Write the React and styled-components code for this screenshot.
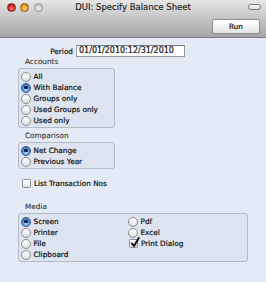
import React from "react";
import styled, { createGlobalStyle, css } from "styled-components";

const Global = createGlobalStyle`
  html, body { margin: 0; padding: 0; }
  body {
    width: 266px; height: 282px; overflow: hidden;
    background: #e4ebf6;
    font-family: "DejaVu Sans", Verdana, sans-serif;
  }
`;

const Window = styled.div`
  width: 266px;
  height: 282px;
  display: flex;
  flex-direction: column;
  background: #e4ebf6;
`;

const Toolbar = styled.div`
  height: 38px;
  box-sizing: border-box;
  background: linear-gradient(#e6e6e6 0%, #d2d2d2 30%, #b4b4b4 75%, #a6a6a6 100%);
  border-bottom: 1px solid #7e7e7e;
  display: flex;
  flex-direction: column;
`;

const TitleRow = styled.div`
  height: 14px;
  display: flex;
  align-items: center;
  padding: 0 5px 0 6.5px;
  position: relative;
`;

const Lights = styled.div`
  display: flex;
  gap: 4.5px;
`;

const lightColors = {
  red: css`background: radial-gradient(circle at 50% 65%, #ff8a80 0%, #e0322a 45%, #9c1010 100%); border: 0.5px solid #7d1b17;`,
  orange: css`background: radial-gradient(circle at 50% 65%, #ffe08a 0%, #f3a22a 45%, #b86a10 100%); border: 0.5px solid #8a5a15;`,
  gray: css`background: radial-gradient(circle at 50% 65%, #f2f2f2 0%, #cfcfcf 50%, #a8a8a8 100%); border: 0.5px solid #999;`,
};

const Light = styled.span`
  width: 9px;
  height: 9px;
  border-radius: 50%;
  box-sizing: border-box;
  ${(p) => lightColors[p.$c]}
`;

const Title = styled.div`
  position: absolute;
  left: 0;
  right: 0;
  top: 0;
  height: 14px;
  line-height: 14px;
  text-align: center;
  font-size: 8.5px;
  color: #1e1e1e;
  -webkit-text-stroke: 0.15px #1e1e1e;
  pointer-events: none;
`;

const Pill = styled.span`
  margin-left: auto;
  width: 13px;
  height: 6px;
  box-sizing: border-box;
  border-radius: 3px;
  border: 1px solid #7c7c7c;
  background: linear-gradient(#ffffff, #d8d8d8);
`;

const ButtonRow = styled.div`
  display: flex;
  justify-content: flex-end;
  padding: 5px 6px 0 0;
`;

const Button = styled.div`
  width: 48px;
  height: 15px;
  box-sizing: border-box;
  border: 1px solid #8e8e8e;
  border-radius: 3px;
  background: linear-gradient(#ffffff 0%, #f3f3f3 50%, #e2e2e2 100%);
  font-size: 7.3px;
  color: #111;
  -webkit-text-stroke: 0.2px #111;
  display: flex;
  align-items: center;
  justify-content: center;
`;

const Content = styled.div`
  padding: 7px 0 0 18px;
  display: flex;
  flex-direction: column;
  font-size: 7.3px;
  color: #111;
  -webkit-text-stroke: 0.2px #111;
`;

const PeriodRow = styled.div`
  display: flex;
  align-items: center;
  height: 12px;
  margin-left: 30px;
  gap: 3px;
`;

const PeriodLabel = styled.span`
  width: 25px;
  text-align: right;
`;

const Input = styled.div`
  width: 109px;
  height: 12px;
  box-sizing: border-box;
  background: #fff;
  border: 1px solid #9a9a9a;
  border-top-color: #7a7a7a;
  font-size: 8px;
  line-height: 10px;
  padding-left: 2px;
`;

const SectionLabel = styled.div`
  height: 10px;
  line-height: 10px;
  padding-left: 7px;
  margin-top: ${(p) => p.$mt}px;
  color: #333;
  -webkit-text-stroke: 0.1px #333;
`;

const Box = styled.div`
  width: ${(p) => p.$w}px;
  box-sizing: border-box;
  margin-top: 1px;
  border: 1px solid #b3bbc7;
  border-radius: 3px;
  background: #dde4ef;
  padding: 2px 2px 1px 2px;
  display: flex;
`;

const Column = styled.div`
  display: flex;
  flex-direction: column;
  width: ${(p) => (p.$w ? `${p.$w}px` : "auto")};
`;

const Row = styled.div`
  height: 11px;
  display: flex;
  align-items: center;
  gap: 2.5px;
  white-space: nowrap;
`;

const RadioCircle = styled.span`
  width: 10px;
  height: 10px;
  flex: none;
  box-sizing: border-box;
  border-radius: 50%;
  display: flex;
  align-items: center;
  justify-content: center;
  ${(p) =>
    p.$on
      ? css`
          border: 1px solid #33558a;
          background: radial-gradient(circle at 50% 70%, #b9d6ff 0%, #5b94e0 45%, #2a5fb0 100%);
          &::after {
            content: "";
            width: 3.5px;
            height: 3.5px;
            border-radius: 50%;
            background: #0e1a2c;
          }
        `
      : css`
          border: 1px solid #8c8c8c;
          background: linear-gradient(#ffffff 0%, #f2f2f2 50%, #dadada 100%);
        `}
`;

const CheckSquare = styled.span`
  width: 9px;
  height: 9px;
  flex: none;
  box-sizing: border-box;
  border: 1px solid #8c8c8c;
  border-radius: 1.5px;
  background: linear-gradient(#ffffff 0%, #f2f2f2 50%, #dcdcdc 100%);
  position: relative;
`;

const CheckMark = styled.svg`
  position: absolute;
  left: 0px;
  top: -3px;
  width: 10px;
  height: 11px;
  overflow: visible;
`;

const CheckRow = styled(Row)`
  margin-top: 9px;
  padding-left: 4px;
  gap: 3px;
`;

const MediaColumn2Row = styled(Row)`
  padding-left: 1px;
  gap: 3px;
`;

function Radio({ on, children }) {
  return (
    <Row>
      <RadioCircle $on={on} />
      <span>{children}</span>
    </Row>
  );
}

function Check({ on }) {
  return (
    <CheckSquare>
      {on && (
        <CheckMark viewBox="0 0 10 11">
          <path d="M1.8 6.4 L4 9 L8.8 1" fill="none" stroke="#111" strokeWidth="1.9" strokeLinecap="round" strokeLinejoin="round" />
        </CheckMark>
      )}
    </CheckSquare>
  );
}

export default function App() {
  return (
    <>
      <Global />
      <Window>
        <Toolbar>
          <TitleRow>
            <Lights>
              <Light $c="red" />
              <Light $c="orange" />
              <Light $c="gray" />
            </Lights>
            <Title>DUI: Specify Balance Sheet</Title>
            <Pill />
          </TitleRow>
          <ButtonRow>
            <Button>Run</Button>
          </ButtonRow>
        </Toolbar>
        <Content>
          <PeriodRow>
            <PeriodLabel>Period</PeriodLabel>
            <Input>01/01/2010:12/31/2010</Input>
          </PeriodRow>

          <SectionLabel $mt={0}>Accounts</SectionLabel>
          <Box $w={97}>
            <Column>
              <Radio>All</Radio>
              <Radio on>With Balance</Radio>
              <Radio>Groups only</Radio>
              <Radio>Used Groups only</Radio>
              <Radio>Used only</Radio>
            </Column>
          </Box>

          <SectionLabel $mt={3}>Comparison</SectionLabel>
          <Box $w={97}>
            <Column>
              <Radio on>Net Change</Radio>
              <Radio>Previous Year</Radio>
            </Column>
          </Box>

          <CheckRow>
            <Check />
            <span>List Transaction Nos</span>
          </CheckRow>

          <SectionLabel $mt={13}>Media</SectionLabel>
          <Box $w={230}>
            <Column $w={107}>
              <Radio on>Screen</Radio>
              <Radio>Printer</Radio>
              <Radio>File</Radio>
              <Radio>Clipboard</Radio>
            </Column>
            <Column>
              <Radio>Pdf</Radio>
              <Radio>Excel</Radio>
              <MediaColumn2Row>
                <Check on />
                <span>Print Dialog</span>
              </MediaColumn2Row>
            </Column>
          </Box>
        </Content>
      </Window>
    </>
  );
}
